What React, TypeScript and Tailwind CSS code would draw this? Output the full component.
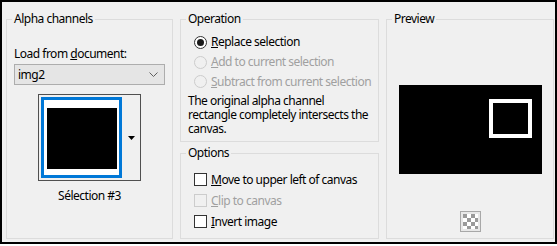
import React from "react";

const font = "font-['Noto_Sans',sans-serif]";

function Radio({ checked, disabled, children }: { checked?: boolean; disabled?: boolean; children: React.ReactNode }) {
  return (
    <div className="flex items-center h-full">
      <div
        className={
          "w-[13px] h-[13px] rounded-full border flex items-center justify-center shrink-0 " +
          (disabled ? "border-[#cccccc] bg-[#f0f0f0]" : "border-[#333333] bg-white")
        }
      >
        {checked && <div className="w-[7px] h-[7px] rounded-full bg-[#1a1a1a]" />}
      </div>
      <span className={"ml-[4px] whitespace-nowrap " + (disabled ? "text-[#a0a0a0]" : "text-black")}>{children}</span>
    </div>
  );
}

function Check({ disabled, children }: { disabled?: boolean; children: React.ReactNode }) {
  return (
    <div className="flex items-center h-full">
      <div
        className={
          "w-[13px] h-[13px] border shrink-0 " + (disabled ? "border-[#cccccc] bg-[#f0f0f0]" : "border-[#333333] bg-white")
        }
      />
      <span className={"ml-[4px] whitespace-nowrap " + (disabled ? "text-[#a0a0a0]" : "text-black")}>{children}</span>
    </div>
  );
}

function Legend({ children }: { children: React.ReactNode }) {
  return <legend className="ml-[5px] px-[2px] leading-[16px] text-black">{children}</legend>;
}

export default function App() {
  return (
    <div className={"w-[557px] h-[246px] bg-white text-[12px] leading-[16px] tracking-[-0.5px] " + font}>
      <div className="w-[557px] h-[244px] border-2 border-black bg-[#f0f0f0] flex pl-[4px] pt-[9px]">
        {/* Alpha channels */}
        <fieldset className="w-[166px] h-[228px] border border-[#dcdcdc] flex flex-col">
          <Legend>Alpha channels</Legend>
          <div className="px-[7px] flex flex-col">
            <div className="mt-[19px] h-[16px] whitespace-nowrap">
              Load from <span className="underline">d</span>ocument:
            </div>
            <div className="mt-[2px] w-[151px] h-[21px] bg-[#e5e5e5] border border-[#adadad] flex items-center pl-[3px] pr-[6px] justify-between">
              <span>img2</span>
              <svg width="9" height="5" viewBox="0 0 9 5">
                <path d="M0.5 0.5 L4.5 4.5 L8.5 0.5" fill="none" stroke="#606060" strokeWidth="1" />
              </svg>
            </div>
            <div className="mt-[9px] self-center w-[103px] h-[87px] border border-[#505050] flex">
              <div className="pl-[2px] pt-[2px]">
                <div className="w-[81px] h-[81px] border-[3px] border-[#0078d7] bg-white pl-[3px] pt-[8px]">
                  <div className="w-[70px] h-[61px] bg-black" />
                </div>
              </div>
              <div className="flex-1 flex items-center justify-center pl-[1px]">
                <svg width="7" height="4" viewBox="0 0 7 4">
                  <path d="M0 0 H7 L3.5 4 Z" fill="#000" />
                </svg>
              </div>
            </div>
            <div className="mt-[7px] text-center">Sélection #3</div>
          </div>
        </fieldset>

        {/* Middle column */}
        <div className="ml-[7px] w-[199px] flex flex-col">
          <fieldset className="w-[199px] h-[131px] border border-[#dcdcdc]">
            <Legend>Operation</Legend>
            <div className="pl-[13px] pt-[5px]">
              <div className="h-[20px]">
                <Radio checked>
                  <span className="underline">R</span>eplace selection
                </Radio>
              </div>
              <div className="h-[20px]">
                <Radio disabled>
                  <span className="underline">A</span>dd to current selection
                </Radio>
              </div>
              <div className="h-[19px]">
                <Radio disabled>
                  <span className="underline">S</span>ubtract from current selection
                </Radio>
              </div>
            </div>
            <p className="pl-[7px] mt-[3px] leading-[14px] whitespace-nowrap">
              The original alpha channel
              <br />
              rectangle completely intersects the
              <br />
              canvas.
            </p>
          </fieldset>
          <fieldset className="mt-[3px] w-[199px] h-[94px] border border-[#dcdcdc]">
            <Legend>Options</Legend>
            <div className="pl-[13px] pt-[8px]">
              <div className="h-[21px]">
                <Check>
                  <span className="underline">M</span>ove to upper left of canvas
                </Check>
              </div>
              <div className="h-[21px]">
                <Check disabled>
                  <span className="underline">C</span>lip to canvas
                </Check>
              </div>
              <div className="h-[21px]">
                <Check>
                  <span className="underline">I</span>nvert image
                </Check>
              </div>
            </div>
          </fieldset>
        </div>

        {/* Preview */}
        <fieldset className="ml-[7px] w-[168px] h-[228px] border border-[#dcdcdc]">
          <Legend>Preview</Legend>
          <div className="flex flex-col items-center">
            <div className="mt-[58px] w-[143px] h-[89px] bg-black pl-[90px] pt-[14px]">
              <div className="w-[43px] h-[39px] border-[4px] border-white" />
            </div>
            <div className="mt-[37px]">
              <svg width="21" height="21" viewBox="0 0 21 21">
                <rect x="0.5" y="0.5" width="20" height="20" fill="#e8e8e8" stroke="#a8a8a8" />
                <rect x="3" y="3" width="15" height="15" fill="#ffffff" />
                <rect x="3" y="3" width="4" height="4" fill="#9a9a9a" />
                <rect x="11" y="3" width="4" height="4" fill="#9a9a9a" />
                <rect x="7" y="7" width="4" height="4" fill="#9a9a9a" />
                <rect x="15" y="7" width="3" height="4" fill="#9a9a9a" />
                <rect x="3" y="11" width="4" height="4" fill="#9a9a9a" />
                <rect x="11" y="11" width="4" height="4" fill="#9a9a9a" />
                <rect x="7" y="15" width="4" height="3" fill="#9a9a9a" />
                <rect x="15" y="15" width="3" height="3" fill="#9a9a9a" />
              </svg>
            </div>
          </div>
        </fieldset>
      </div>
    </div>
  );
}
